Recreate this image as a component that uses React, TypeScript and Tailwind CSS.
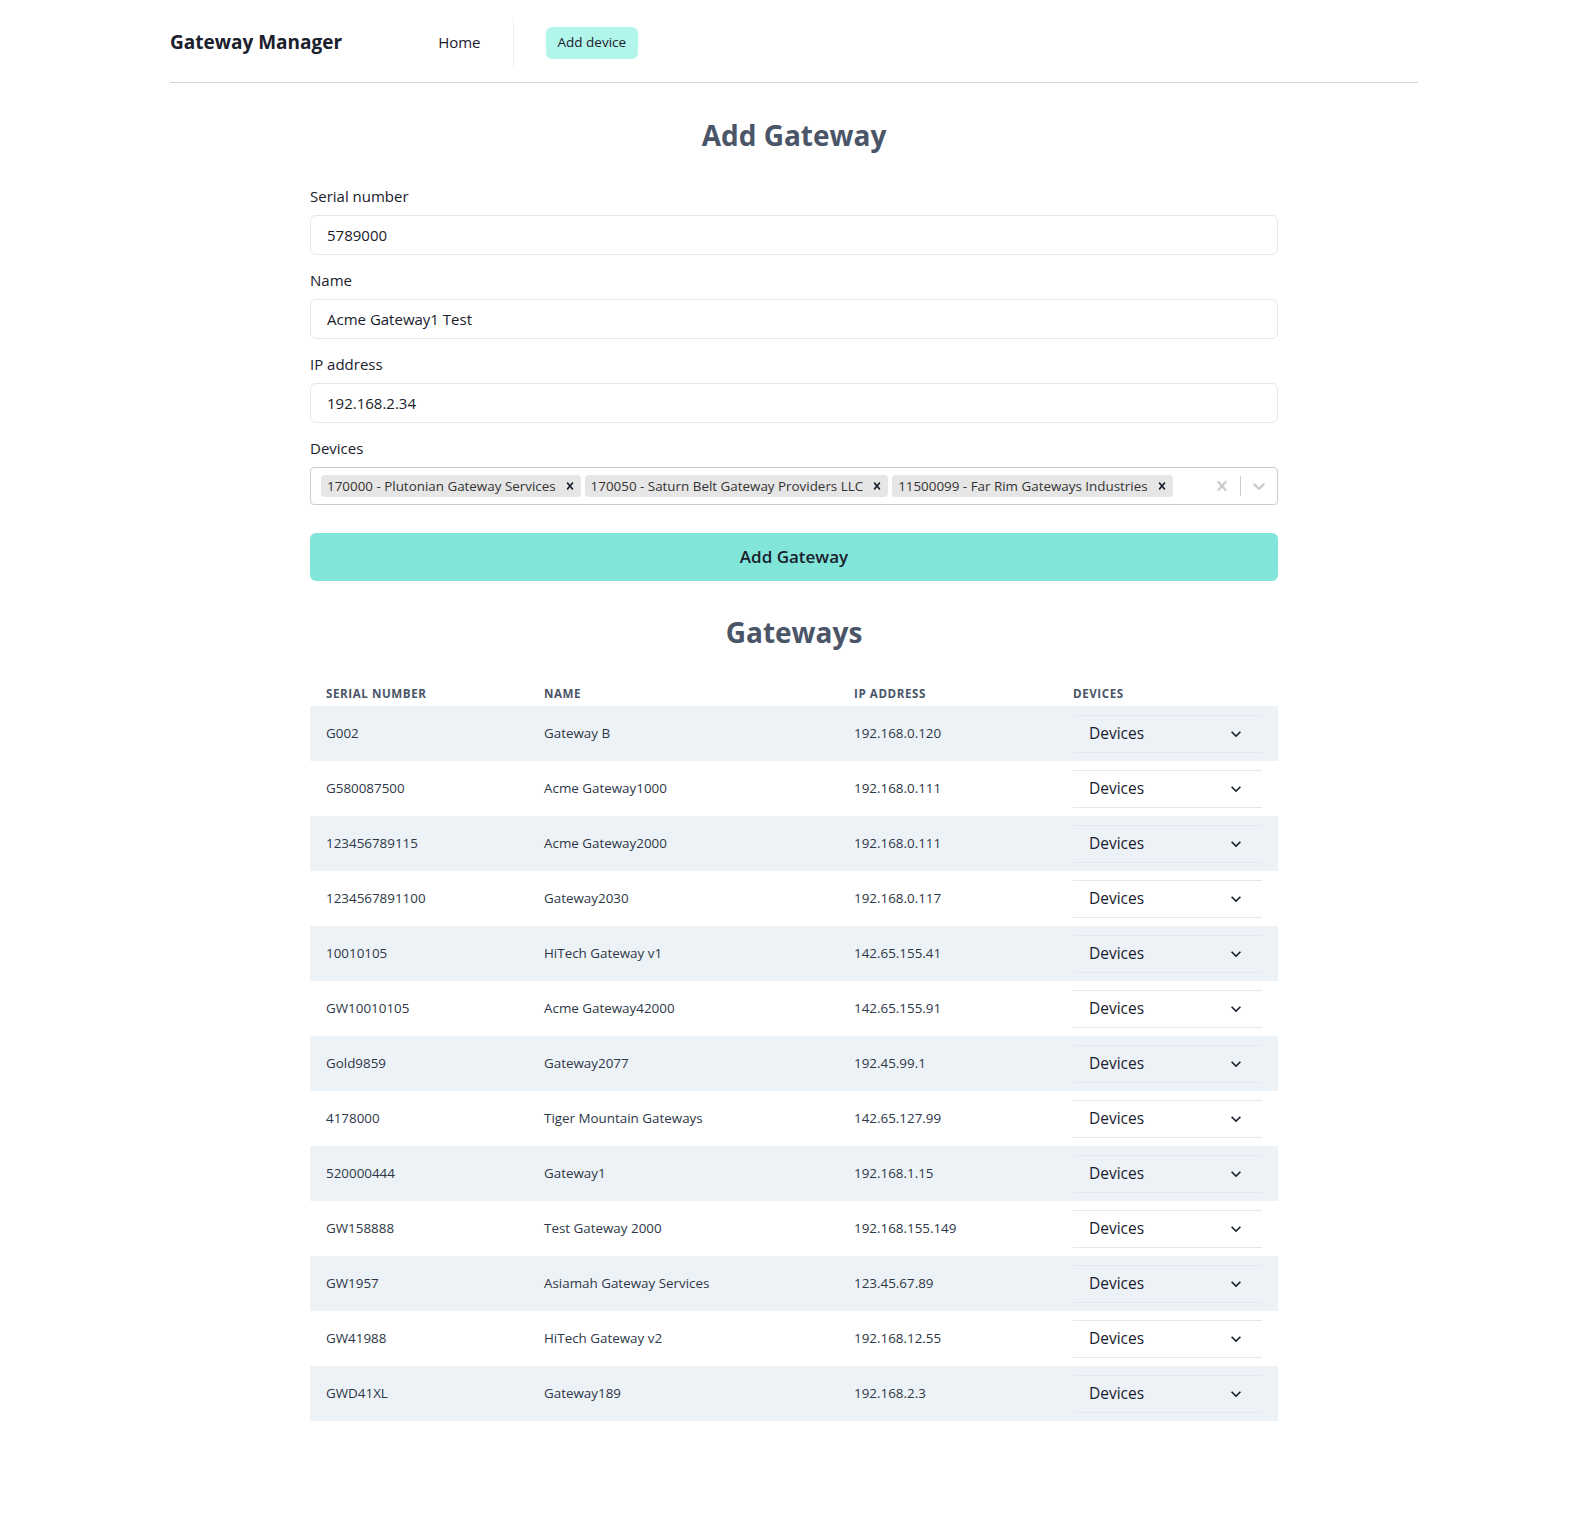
import React from 'react';

const gateways = [
  ['G002', 'Gateway B', '192.168.0.120'],
  ['G580087500', 'Acme Gateway1000', '192.168.0.111'],
  ['123456789115', 'Acme Gateway2000', '192.168.0.111'],
  ['1234567891100', 'Gateway2030', '192.168.0.117'],
  ['10010105', 'HiTech Gateway v1', '142.65.155.41'],
  ['GW10010105', 'Acme Gateway42000', '142.65.155.91'],
  ['Gold9859', 'Gateway2077', '192.45.99.1'],
  ['4178000', 'Tiger Mountain Gateways', '142.65.127.99'],
  ['520000444', 'Gateway1', '192.168.1.15'],
  ['GW158888', 'Test Gateway 2000', '192.168.155.149'],
  ['GW1957', 'Asiamah Gateway Services', '123.45.67.89'],
  ['GW41988', 'HiTech Gateway v2', '192.168.12.55'],
  ['GWD41XL', 'Gateway189', '192.168.2.3'],
];

const selected = [
  '170000 - Plutonian Gateway Services',
  '170050 - Saturn Belt Gateway Providers LLC',
  '11500099 - Far Rim Gateways Industries',
];

// react-select style cross
const Cross = ({ className }: { className?: string }) => (
  <svg viewBox="0 0 20 20" className={className} fill="currentColor">
    <path d="M14.348 14.849c-0.469 0.469-1.229 0.469-1.697 0l-2.651-3.030-2.651 3.029c-0.469 0.469-1.229 0.469-1.697 0-0.469-0.469-0.469-1.229 0-1.697l2.758-3.15-2.759-3.152c-0.469-0.469-0.469-1.228 0-1.697s1.228-0.469 1.697 0l2.652 3.031 2.651-3.031c0.469-0.469 1.228-0.469 1.697 0s0.469 1.229 0 1.697l-2.758 3.152 2.758 3.15c0.469 0.469 0.469 1.229 0 1.698z" />
  </svg>
);

const Field = ({ label, value }: { label: string; value: string }) => (
  <div className="mt-[13px] first:mt-0">
    <label className="block text-[15px] leading-6 mb-[7px] text-[#1a202c]">{label}</label>
    <div className="h-10 flex items-center px-4 border border-[#e2e8f0] rounded-md text-[15px] text-[#1a202c]">
      {value}
    </div>
  </div>
);

export default function App() {
  return (
    <div className="min-h-screen bg-white text-[#1a202c] font-['Open_Sans','Noto_Sans',sans-serif]">
      <div className="max-w-7xl mx-auto px-4">
        {/* top bar */}
        <nav className="h-[83px] pt-[3px] flex items-center border-b border-[#cbd5e0]">
          <span className="text-[19px] font-bold text-[#1a202c]">Gateway Manager</span>
          <span className="ml-[96px] text-[15px] text-[#1a202c]">Home</span>
          <div className="ml-[32px] w-px h-[49px] bg-[#edf2f7]" />
          <span className="ml-[32px] h-8 px-3 flex items-center rounded-md bg-[#b2f5ea] text-[13.5px] font-medium text-[#1a202c]">
            Add device
          </span>
        </nav>

        <div className="max-w-[968px] mx-auto pt-[34px] pb-24">
          <h1 className="text-[28px] leading-9 font-bold text-center text-[#4a5568]">Add Gateway</h1>

          <div className="mt-[31px]">
            <Field label="Serial number" value="5789000" />
            <Field label="Name" value="Acme Gateway1 Test" />
            <Field label="IP address" value="192.168.2.34" />
            <div className="mt-[13px]">
              <label className="block text-[15px] leading-6 mb-[7px] text-[#1a202c]">Devices</label>
              <div className="min-h-[38px] flex items-center border border-[#cccccc] rounded">
                <div className="flex-1 flex flex-wrap items-center px-2 py-0.5">
                  {selected.map((s) => (
                    <div key={s} className="m-0.5 flex items-center bg-[#e6e6e6] rounded-sm">
                      <span className="text-[13.4px] leading-4 py-[3px] pl-1.5 pr-[3px] text-[#333333]">{s}</span>
                      <span className="px-1 flex items-center text-[#1a202c]">
                        <Cross className="w-[14px] h-[14px]" />
                      </span>
                    </div>
                  ))}
                </div>
                <div className="flex items-center self-stretch">
                  <span className="p-2 text-[#cccccc]">
                    <Cross className="w-5 h-5" />
                  </span>
                  <span className="w-px self-stretch my-2 bg-[#cccccc]" />
                  <span className="p-2 text-[#cccccc]">
                    <svg viewBox="0 0 20 20" className="w-5 h-5" fill="currentColor">
                      <path d="M4.516 7.548c0.436-0.446 1.043-0.481 1.576 0l3.908 3.747 3.908-3.747c0.533-0.481 1.141-0.446 1.574 0 0.436 0.445 0.408 1.197 0 1.615-0.406 0.418-4.695 4.502-4.695 4.502-0.217 0.223-0.502 0.335-0.787 0.335s-0.57-0.112-0.789-0.335c0 0-4.287-4.084-4.695-4.502s-0.436-1.17 0-1.615z" />
                    </svg>
                  </span>
                </div>
              </div>
            </div>
          </div>

          <button className="mt-7 w-full h-12 rounded-md bg-[#81e6d9] text-[17px] font-semibold text-[#1a202c]">
            Add Gateway
          </button>

          <h2 className="mt-[33px] text-[28px] leading-9 font-bold text-center text-[#4a5568]">Gateways</h2>

          <table className="mt-[32px] w-full table-fixed border-collapse">
            <colgroup>
              <col className="w-[218px]" />
              <col className="w-[310px]" />
              <col className="w-[219px]" />
              <col />
            </colgroup>
            <thead>
              <tr>
                {['Serial number', 'Name', 'IP address', 'Devices'].map((h) => (
                  <th
                    key={h}
                    className="px-4 py-1 text-left text-[11.6px] leading-4 font-bold uppercase tracking-wider text-[#4a5568]"
                  >
                    {h}
                  </th>
                ))}
              </tr>
            </thead>
            <tbody>
              {gateways.map(([serial, name, ip], i) => (
                <tr key={serial} className={i % 2 === 0 ? 'bg-[#edf2f7]' : 'bg-white'}>
                  <td className="px-4 h-[55px] text-[13.4px] text-[#2d3748]">{serial}</td>
                  <td className="px-4 h-[55px] text-[13.4px] text-[#2d3748]">{name}</td>
                  <td className="px-4 h-[55px] text-[13.4px] text-[#2d3748]">{ip}</td>
                  <td className="px-4 h-[55px]">
                    <div className="h-[38px] flex items-center justify-between pl-4 pr-4 border-y border-[#e2e8f0]">
                      <span className="text-[15.5px] text-[#1a202c]">Devices</span>
                      <svg viewBox="0 0 24 24" className="w-5 h-5 text-[#1a202c]" fill="currentColor">
                        <path d="M16.59 8.59L12 13.17 7.41 8.59 6 10l6 6 6-6z" />
                      </svg>
                    </div>
                  </td>
                </tr>
              ))}
            </tbody>
          </table>
        </div>
      </div>
    </div>
  );
}
